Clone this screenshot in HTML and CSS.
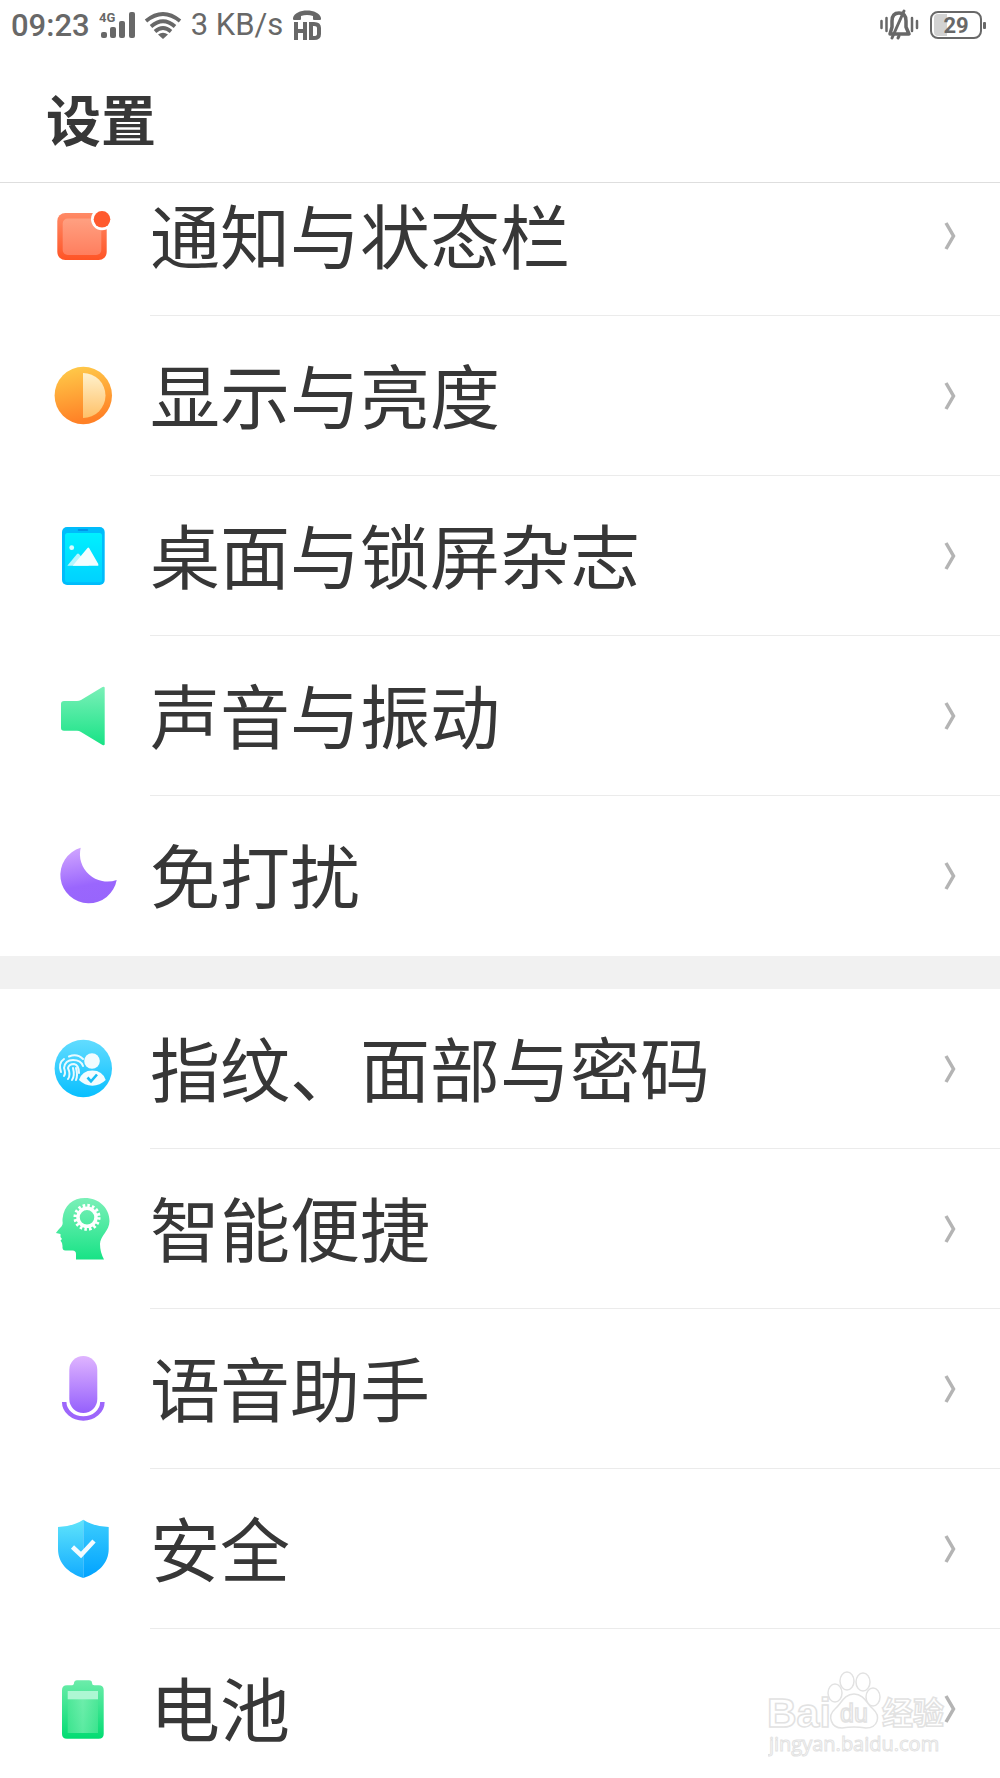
FILE: index.html
```html
<!DOCTYPE html>
<html lang="zh-CN">
<head>
<meta charset="utf-8">
<meta name="viewport" content="width=device-width, initial-scale=1">
<title>设置</title>
<link rel="stylesheet" href="styles.css">
</head>
<body>
<svg class="defs" width="0" height="0" aria-hidden="true">
  <defs>
    <linearGradient id="red" x1="0" y1="0" x2="0" y2="1"><stop offset="0" stop-color="#ff8a66"/><stop offset="1" stop-color="#ff5426"/></linearGradient>
    <linearGradient id="red-in" x1="0" y1="0" x2="0" y2="1"><stop offset="0" stop-color="#ffa081"/><stop offset="1" stop-color="#ff7e5e"/></linearGradient>
    <linearGradient id="orange" x1="0" y1="0" x2="0.2" y2="1"><stop offset="0" stop-color="#ffce4b"/><stop offset="1" stop-color="#ff8126"/></linearGradient>
    <linearGradient id="cream" x1="0" y1="0" x2="0" y2="1"><stop offset="0" stop-color="#fff1cc"/><stop offset="1" stop-color="#ffc168"/></linearGradient>
    <linearGradient id="cyan" x1="0" y1="0" x2="0" y2="1"><stop offset="0" stop-color="#00f0ff"/><stop offset="1" stop-color="#00d2ff"/></linearGradient>
    <linearGradient id="green" x1="0" y1="0" x2="0" y2="1"><stop offset="0" stop-color="#7bf0b8"/><stop offset="1" stop-color="#18e386"/></linearGradient>
    <linearGradient id="green-v" x1="0" y1="0" x2="0" y2="1"><stop offset="0" stop-color="#6cecaa"/><stop offset="1" stop-color="#02dc72"/></linearGradient>
    <linearGradient id="green-in" x1="0" y1="0" x2="1" y2="0"><stop offset="0" stop-color="#4fe798"/><stop offset="0.5" stop-color="#7cf0b3"/><stop offset="1" stop-color="#4fe798"/></linearGradient>
    <linearGradient id="purple" x1="0.2" y1="0" x2="0.4" y2="1"><stop offset="0" stop-color="#d1a6ff"/><stop offset="0.7" stop-color="#9a66fd"/><stop offset="1" stop-color="#9865fc"/></linearGradient>
    <linearGradient id="mic" x1="0" y1="0" x2="0" y2="1"><stop offset="0" stop-color="#dfb4ff"/><stop offset="1" stop-color="#9560fc"/></linearGradient>
    <linearGradient id="blue" x1="0" y1="0" x2="0" y2="1"><stop offset="0" stop-color="#62dcff"/><stop offset="1" stop-color="#08bfff"/></linearGradient>
    <linearGradient id="shield-l" x1="0" y1="0" x2="0" y2="1"><stop offset="0" stop-color="#60e4fb"/><stop offset="1" stop-color="#12acff"/></linearGradient>
    <linearGradient id="shield-r" x1="0" y1="0" x2="0" y2="1"><stop offset="0" stop-color="#3ccdfd"/><stop offset="1" stop-color="#00a2ff"/></linearGradient>
    <symbol id="chevron" viewBox="0 0 12 30"><path d="M2 2 9.500 15 2 28" fill="none" stroke="#b4b4b4" stroke-width="3.500"/></symbol>
  </defs>
</svg>

<div class="screen">
  <div class="status">
    <div class="status-group">
      <span class="clock">09:23</span>
      <svg class="signal" viewBox="0 0 36 30" width="36" height="30" aria-hidden="true">
        <g fill="#686868"><rect x="2" y="22" width="6" height="6" rx="2"/><rect x="11" y="17" width="6" height="11" rx="2"/><rect x="20" y="11" width="6" height="17" rx="2"/><rect x="30" y="2" width="6" height="26" rx="2"/></g>
        <text x="0" y="12" class="tag-4g">4G</text>
      </svg>
      <svg class="wifi" viewBox="0 0 38 28" width="38" height="28" aria-hidden="true">
        <g fill="none" stroke="#686868" stroke-width="3.800"><path d="M2 10Q19-4 36 10"/><path d="M7 15.500Q19 5 31 15.500"/><path d="M11 20.500Q19 13.500 27 20.500"/></g>
        <path d="M14 23.500Q19 20 24 23.500L19 28Z" fill="#686868"/>
      </svg>
      <span class="speed">3 KB/s</span>
      <svg class="hd" viewBox="0 0 30 30" width="30" height="30" aria-hidden="true">
        <path d="M1 8C3-2 27-2 29 8V9Q29 10 28 10H22Q21 10 21 9V6Q15 4 9 6V9Q9 10 8 10H2Q1 10 1 9Z" fill="#686868"/>
        <g fill="none" stroke="#686868" stroke-width="4"><path d="M4 12V30M13 12V30M4 21H13"/><path d="M19 14H22Q27 14 27 18V24Q27 28 22 28H19Z"/></g>
      </svg>
    </div>
    <div class="status-group">
      <svg class="bell" viewBox="0 0 40 32" width="40" height="32" aria-hidden="true">
        <g fill="none" stroke="#686868" stroke-linecap="round"><path stroke-width="2.500" d="M2.500 12V19M7.500 9V22M33 9V22M38 12V19"/><path stroke-width="3.500" stroke-linejoin="round" d="M11 25 13 18V12C13 6 16 4 20 4S27 6 27 12V18L30 25Z"/><path stroke-width="3" d="M25 2 13 29M20 27 19 29"/></g>
      </svg>
      <svg class="power" viewBox="0 0 56 30" width="56" height="30" aria-hidden="true">
        <path d="M8 4H17V26H8Q4 26 4 22V8Q4 4 8 4Z" fill="#d2d2d2"/>
        <rect x="1" y="2" width="50" height="26" rx="7" fill="none" stroke="#686868" stroke-width="2"/>
        <rect x="53" y="12" width="3" height="7" rx="1" fill="#686868"/>
        <text x="26" y="23" text-anchor="middle" class="power-text">29</text>
      </svg>
    </div>
  </div>

  <header class="header"><h1 class="title">设置</h1></header>

  <main class="content">
    <nav class="group">
      <a class="row" href="#notifications">
        <svg class="icon" viewBox="0 0 64 64" aria-hidden="true"><rect x="6.300" y="9" width="49.400" height="47" rx="8" fill="url(#red)"/><rect x="11.700" y="14.500" width="38.600" height="36.500" rx="5" fill="url(#red-in)"/><circle cx="51" cy="15.300" r="11" fill="#fff"/><circle cx="51" cy="15.300" r="8.300" fill="#ff5a2e"/></svg>
        <span class="label">通知与状态栏</span><svg class="chevron" aria-hidden="true"><use href="#chevron"/></svg>
      </a>
      <a class="row" href="#display">
        <svg class="icon" viewBox="0 0 64 64" aria-hidden="true"><circle cx="32.300" cy="31.500" r="28.700" fill="url(#orange)"/><path d="M32 9A22.500 22.500 0 0 1 32 54Z" fill="url(#cream)"/></svg>
        <span class="label">显示与亮度</span><svg class="chevron" aria-hidden="true"><use href="#chevron"/></svg>
      </a>
      <a class="row" href="#wallpaper">
        <svg class="icon" viewBox="0 0 64 64" aria-hidden="true"><rect x="11" y="3" width="42.700" height="58" rx="5" fill="#00bcfb"/><rect x="14" y="9" width="37" height="49.300" rx="2.500" fill="url(#cyan)"/><rect x="26.700" y="5" width="10.500" height="2" rx="1" fill="#0095e8"/><circle cx="20.700" cy="23.700" r="2.400" fill="#d8fcff"/><path d="M16.300 41.700 26 30Q27 29 28 30L38 41.700Z" fill="#b5f7ff"/><path d="M21.700 41.700 36.500 24Q37.300 23 38.100 24L47.300 40V41.700Z" fill="#f2feff"/></svg>
        <span class="label">桌面与锁屏杂志</span><svg class="chevron" aria-hidden="true"><use href="#chevron"/></svg>
      </a>
      <a class="row" href="#sound">
        <svg class="icon" viewBox="0 0 64 64" aria-hidden="true"><path d="M13 17H26Q28 17 30 16L51.500 3Q53.700 2 53.700 4V60Q53.700 62 51.500 61L30 48Q28 46.700 26 46.700H13Q10 46.700 10 44V20Q10 17 13 17Z" fill="url(#green)"/></svg>
        <span class="label">声音与振动</span><svg class="chevron" aria-hidden="true"><use href="#chevron"/></svg>
      </a>
      <a class="row" href="#dnd">
        <svg class="icon" viewBox="0 0 64 64" aria-hidden="true"><path d="M29.700 3.700A28.400 28.400 0 1 0 65.700 36A27.500 27.500 0 0 1 29.700 3.700Z" fill="url(#purple)"/></svg>
        <span class="label">免打扰</span><svg class="chevron" aria-hidden="true"><use href="#chevron"/></svg>
      </a>
    </nav>
    <nav class="group">
      <a class="row" href="#biometrics">
        <svg class="icon" viewBox="0 0 64 64" aria-hidden="true"><circle cx="32.300" cy="31.500" r="28.700" fill="url(#blue)"/><g fill="none" stroke="#e9faff" stroke-width="2" stroke-linecap="round"><path d="M18 19.500Q26 16 32 22M10 35Q7 26 13 22M13 39Q15 36 13 31Q14 23 22 23Q30 23 32 29M17 42Q20 38 17 31Q18 27 23 27Q28 28 28 36M21 43Q24 39 22 31M25 31Q27 38 25 43"/></g><circle cx="41" cy="24" r="7.800" fill="#f2fcff"/><path d="M28 43Q31 33.500 41.300 33.500T54.700 43Q49 48.700 41.300 48.700T28 43Z" fill="#f2fcff"/><path d="M36.500 40.500 40 44.300 46 37.500" fill="none" stroke="#16bdf5" stroke-width="2.600"/></svg>
        <span class="label">指纹、面部与密码</span><svg class="chevron" aria-hidden="true"><use href="#chevron"/></svg>
      </a>
      <a class="row" href="#smart">
        <svg class="icon" viewBox="0 0 64 64" aria-hidden="true"><path d="M11.500 22C13 8 22 1 34 1C48 1 58.500 11 58.500 24C58.500 34 49 39 49 47Q49 55 53 62.500H25V57Q25 53.500 21.500 53.500H14.500Q11 53.500 11.500 49L11 46 9.500 43.500 11 42 9.500 40V37L5 36Q5.500 35 9 31Q12.500 28 11.500 24Z" fill="url(#green)"/><circle cx="36" cy="20.300" r="9" fill="none" stroke="#fff" stroke-width="3.500"/><circle cx="36" cy="20.300" r="11.800" fill="none" stroke="#fff" stroke-width="3.500" stroke-dasharray="2.500 2.134"/></svg>
        <span class="label">智能便捷</span><svg class="chevron" aria-hidden="true"><use href="#chevron"/></svg>
      </a>
      <a class="row" href="#voice">
        <svg class="icon" viewBox="0 0 64 64" aria-hidden="true"><rect x="18.300" y="-1" width="28" height="57" rx="14" fill="url(#mic)"/><path d="M13.200 45A19.100 16.500 0 0 0 51.400 45" fill="none" stroke="#9d66fb" stroke-width="4.500"/></svg>
        <span class="label">语音助手</span><svg class="chevron" aria-hidden="true"><use href="#chevron"/></svg>
      </a>
      <a class="row" href="#security">
        <svg class="icon" viewBox="0 0 64 64" aria-hidden="true"><path d="M32.300 2.700Q22 9.500 7 10V32C7 46 17 56 32.300 61Z" fill="url(#shield-l)"/><path d="M32.300 2.700Q42.600 9.500 57.700 10V32C57.700 46 47.600 56 32.300 61Z" fill="url(#shield-r)"/><path d="M21.500 30 30 38 43 24" fill="none" stroke="#f4fbff" stroke-width="4.500"/></svg>
        <span class="label">安全</span><svg class="chevron" aria-hidden="true"><use href="#chevron"/></svg>
      </a>
      <a class="row" href="#battery">
        <svg class="icon" viewBox="0 0 64 64" aria-hidden="true"><path d="M16 8.300H20Q23 8.300 23 6T26 3.300H38Q41 3.300 41 6T44 8.300H47.700Q52.700 8.300 52.700 13.300V57Q52.700 61.700 47.700 61.700H16Q11 61.700 11 57V13.300Q11 8.300 16 8.300Z" fill="url(#green-v)"/><rect x="16.700" y="14" width="30.300" height="42" fill="url(#green-in)" opacity="0.700"/><rect x="16.700" y="14" width="30.300" height="8.300" fill="#adf7d3"/></svg>
        <span class="label">电池</span><svg class="chevron" aria-hidden="true"><use href="#chevron"/></svg>
      </a>
    </nav>
  </main>

  <svg class="watermark" viewBox="0 0 190 100" width="190" height="100" role="img" aria-label="Baidu 经验">
    <g fill="#fff" stroke="#e2e2e2" stroke-width="1.500">
      <ellipse cx="67" cy="32" rx="7" ry="9"/><ellipse cx="79" cy="20" rx="7" ry="9"/><ellipse cx="95" cy="21" rx="7" ry="9"/><ellipse cx="105" cy="36" rx="7" ry="9"/>
      <path d="M86 33C76 33 73 43 67 48C59 55 63 67 74 67Q86 65 98 67C110 67 113 55 105 48C99 43 96 33 86 33Z"/>
      <text x="-1" y="66" class="wm-main">Bai</text>
      <text x="72" y="61" class="wm-du">du</text>
      <text x="114" y="63" class="wm-cjk">经验</text>
      <text x="1" y="90" class="wm-url">jingyan.baidu.com</text>
    </g>
  </svg>
</div>
</body>
</html>
```
FILE: styles.css
```css
* { box-sizing: border-box; }

body {
  margin: 0;
  background: #fff;
  color: #373737;
  font-family: Roboto, "Noto Sans CJK SC", sans-serif;
}

.defs { position: absolute; }

.screen {
  position: relative;
  display: flex;
  flex-direction: column;
  height: 100vh;
  overflow: hidden;
}

.status {
  display: flex;
  flex: none;
  justify-content: space-between;
  align-items: center;
  height: 50px;
  padding: 0 14px 0 11px;
  color: #686868;
}

.status-group { display: flex; align-items: center; }
.clock { padding-top: 2px; font-size: 31px; font-weight: 500; line-height: 40px; }
.signal { margin-left: 9px; }
.wifi { margin-left: 9px; }
.speed { margin-left: 9px; font-size: 31px; line-height: 40px; }
.hd { margin-left: 9px; }
.bell { margin-right: 11px; }
.tag-4g { font-size: 13px; font-weight: 700; fill: #686868; }
.power-text { font-size: 22px; font-weight: 700; fill: #686868; }

.header {
  z-index: 1;
  flex: none;
  height: 133px;
  padding: 32px 46px 0;
  border-bottom: 1px solid #dedede;
  background: #fff;
}

.title {
  margin: 0;
  font-size: 55px;
  font-weight: 700;
  line-height: 80px;
}

/* The list is scrolled slightly under the header. */
.content { flex: none; margin-top: -27px; }

.group + .group { border-top: 33px solid #f1f1f1; }

.row {
  display: flex;
  align-items: center;
  height: 160px;
  padding-left: 51px;
  color: inherit;
  text-decoration: none;
  background: linear-gradient(#ebebeb, #ebebeb) 150px 100% / 100% 1px no-repeat;
}

.row:last-child { background: none; }

.icon { flex: none; width: 64px; height: 64px; overflow: visible; }

.label {
  flex: 1;
  margin-left: 35px;
  padding-top: 8px;
  font-size: 70px;
  line-height: 100px;
}

.chevron { flex: none; width: 12px; height: 30px; margin-right: 44px; }

.watermark { position: absolute; right: 42px; bottom: 17px; }
.wm-main { font: 700 41px "Liberation Sans", sans-serif; }
.wm-du { font: 400 25px "Liberation Sans", sans-serif; }
.wm-cjk { font: 700 31px "Noto Sans CJK SC", sans-serif; }
.wm-url { font: 400 20px "Open Sans", sans-serif; stroke-width: 1px; }
```
